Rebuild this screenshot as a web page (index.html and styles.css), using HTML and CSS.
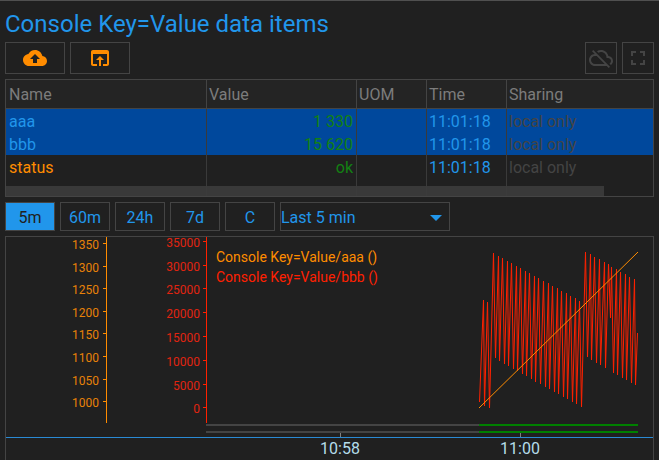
FILE: index.html
```html
<!DOCTYPE html>
<html lang="en">
<head>
<meta charset="utf-8">
<title>Console Key=Value data items</title>
<link rel="stylesheet" href="styles.css">
</head>
<body>
<main class="panel">
  <h1 class="title">Console Key=Value data items</h1>

  <div class="toolbar">
    <button class="btn btn-wide" type="button" aria-label="Upload">
      <svg class="icon" viewBox="0 0 24 24"><path d="M19.35 10.04C18.67 6.59 15.64 4 12 4 9.11 4 6.6 5.64 5.35 8.04 2.34 8.36 0 10.91 0 14c0 3.31 2.69 6 6 6h13c2.76 0 5-2.24 5-5 0-2.64-2.05-4.78-4.65-4.96zM14 13v4h-4v-4H7l5-5 5 5h-3z"/></svg>
    </button>
    <button class="btn btn-wide" type="button" aria-label="Open in window">
      <svg class="icon" viewBox="0 0 24 24"><path d="M19 4H5c-1.11 0-2 .9-2 2v12c0 1.1.89 2 2 2h4v-2H5V8h14v10h-4v2h4c1.1 0 2-.9 2-2V6c0-1.1-.89-2-2-2zm-7 6l-4 4h3v6h2v-6h3l-4-4z"/></svg>
    </button>
    <span class="spacer"></span>
    <button class="btn btn-square" type="button" aria-label="Cloud off">
      <svg class="icon" viewBox="0 0 24 24"><path d="M19.35 10.04C18.67 6.59 15.64 4 12 4c-1.48 0-2.85.43-4.01 1.17l1.46 1.46C10.21 6.23 11.08 6 12 6c3.04 0 5.5 2.46 5.5 5.5v.5H19c1.66 0 3 1.34 3 3 0 1.13-.64 2.11-1.56 2.62l1.45 1.45C23.16 18.16 24 16.68 24 15c0-2.64-2.05-4.78-4.65-4.96zM3 5.27l2.75 2.74C2.56 8.15 0 10.77 0 14c0 3.31 2.69 6 6 6h11.73l2 2L21 20.73 4.27 4 3 5.27zM7.73 10l8 8H6c-2.21 0-4-1.79-4-4s1.79-4 4-4h1.73z"/></svg>
    </button>
    <button class="btn btn-square" type="button" aria-label="Full screen">
      <svg class="icon" viewBox="0 0 24 24"><path d="M7 14H5v5h5v-2H7v-3zm-2-4h2V7h3V5H5v5zm12 7h-3v2h5v-5h-2v3zM14 5v2h3v3h2V5h-5z"/></svg>
    </button>
  </div>

  <div class="table-box">
    <table class="items">
      <colgroup><col class="c-name"><col class="c-value"><col class="c-uom"><col class="c-time"><col></colgroup>
      <thead>
        <tr><th>Name</th><th>Value</th><th>UOM</th><th>Time</th><th>Sharing</th></tr>
      </thead>
      <tbody>
        <tr class="selected"><td>aaa</td><td class="value">1 330</td><td></td><td class="time">11:01:18</td><td class="sharing">local only</td></tr>
        <tr class="selected"><td>bbb</td><td class="value">15 620</td><td></td><td class="time">11:01:18</td><td class="sharing">local only</td></tr>
        <tr><td>status</td><td class="value">ok</td><td></td><td class="time">11:01:18</td><td class="sharing">local only</td></tr>
        <tr class="filler"><td></td><td></td><td></td><td></td><td></td></tr>
      </tbody>
    </table>
    <div class="scroll-thumb"></div>
  </div>

  <div class="ranges">
    <button class="range active" type="button">5m</button>
    <button class="range" type="button">60m</button>
    <button class="range" type="button">24h</button>
    <button class="range" type="button">7d</button>
    <button class="range" type="button">C</button>
    <div class="period">
      <select class="period-select" aria-label="Period"><option>Last 5 min</option></select>
      <svg class="period-arrow" viewBox="0 0 12 6"><path d="M0 0H12L6 6Z"/></svg>
    </div>
  </div>

  <div class="chart">
    <svg class="plot" viewBox="6 237 647 223">
      <g class="axis-a">
        <path class="axis-line" d="M106.5 237V423M103 243.5H106M103 266.5H106M103 288.5H106M103 311.5H106M103 333.5H106M103 356.5H106M103 379.5H106M103 401.5H106"/>
        <g class="axis-text">
          <text x="99" y="249">1350</text>
          <text x="99" y="272">1300</text>
          <text x="99" y="294">1250</text>
          <text x="99" y="317">1200</text>
          <text x="99" y="339">1150</text>
          <text x="99" y="362">1100</text>
          <text x="99" y="385">1050</text>
          <text x="99" y="407">1000</text>
        </g>
      </g>
      <g class="axis-b">
        <path class="axis-line" d="M206.5 237V423M203 241.5H206M203 265.5H206M203 288.5H206M203 312.5H206M203 336.5H206M203 360.5H206M203 384.5H206M203 407.5H206"/>
        <g class="axis-text">
          <text x="200" y="247">35000</text>
          <text x="200" y="271">30000</text>
          <text x="200" y="294">25000</text>
          <text x="200" y="318">20000</text>
          <text x="200" y="342">15000</text>
          <text x="200" y="366">10000</text>
          <text x="200" y="390">5000</text>
          <text x="200" y="413">0</text>
        </g>
      </g>
      <g class="legend">
        <text class="legend-a" x="216" y="262">Console Key=Value/aaa ()</text>
        <text class="legend-b" x="216" y="282">Console Key=Value/bbb ()</text>
      </g>
      <path class="series-b" d="M479.5 402L483.5 300 484.5 406 487.5 302 489.5 408 493.5 253 495.5 358 498.5 256 499.5 361 502.5 258 504.5 364 507.5 261 508.5 366 511.5 263 513.5 369 516.5 266 517.5 371 520.5 268 522.5 374 525.5 271 526.5 376 529.5 273 531.5 379 534.5 276 535.5 382 538.5 278 540.5 384 543.5 281 545.5 387 548.5 283 549.5 389 552.5 286 554.5 392 557.5 288 558.5 394 561.5 291 563.5 397 566.5 293 567.5 399 570.5 296 572.5 402 575.5 298 576.5 404 579.5 301 581.5 407 585.5 252 587.5 357 590.5 254 591.5 360 594.5 257 596.5 363 599.5 259 600.5 365 604.5 262 605.5 368 608.5 264 610.5 318 611.5 267 613.5 373 616.5 269 617.5 375 620.5 272 622.5 378 625.5 274 626.5 380 629.5 277 631.5 383 634.5 279 635.5 385 637.5 333"/>
      <path class="series-a" d="M479 408L638 252"/>
      <path class="state-idle" d="M206 425H479M206 432H479"/>
      <path class="state-ok" d="M479 425H638M479 432H638"/>
      <path class="time-tick" d="M340.5 433V437M520.5 433V437"/>
      <path class="time-line" d="M6 437.5H653"/>
      <g class="time-text">
        <text x="340" y="454">10:58</text>
        <text x="520" y="454">11:00</text>
      </g>
    </svg>
  </div>
</main>
</body>
</html>
```
FILE: styles.css
```css
* {
  box-sizing: border-box;
}

body {
  margin: 0;
  background: #202020;
  color: #2196eb;
  font: 16px/23px Roboto, "Liberation Sans", sans-serif;
  overflow: hidden;
}

.panel {
  display: flex;
  flex-direction: column;
  gap: 5px;
  padding: 0 5px;
  border-top: 1px solid #505050;
}

.title {
  margin: 10px 0 0;
  font-size: 24px;
  font-weight: 400;
  line-height: 26px;
}

.toolbar,
.ranges {
  display: flex;
  gap: 5px;
}

.spacer {
  flex: 1;
}

.btn,
.range {
  display: flex;
  align-items: center;
  justify-content: center;
  padding: 0;
  border: 1px solid #444;
  background: #202020;
  color: inherit;
  font: inherit;
}

.btn {
  height: 32px;
}

.btn-wide {
  width: 60px;
  color: #ff8c00;
}

.btn-square {
  width: 32px;
  color: #444;
}

.icon {
  width: 24px;
  height: 24px;
  fill: currentColor;
}

.table-box {
  position: relative;
  border: 1px solid #444;
}

.items {
  width: 100%;
  table-layout: fixed;
  border-collapse: separate;
  border-spacing: 0;
}

.c-name {
  width: 201px;
}

.c-value {
  width: 150px;
}

.c-uom {
  width: 70px;
}

.c-time {
  width: 80px;
}

.items th,
.items td {
  height: 23px;
  padding: 0 3px;
  border-right: 1px solid #3a3a3a;
  text-align: left;
  font-weight: 400;
}

.items th {
  height: 29px;
  border-bottom: 1px solid #444;
  border-right-color: #444;
  background: #242424;
  color: #7c7c7c;
}

.items th + th,
.items td + td {
  padding-left: 2px;
}

.items th:last-child,
.items td:last-child {
  border-right: 0;
}

.items td {
  padding-top: 2px;
  line-height: 21px;
  color: #ff8c00;
}

.items .selected td {
  background: #00489c;
  color: #2196eb;
}

.items .value,
.items .selected .value {
  color: #138013;
  text-align: right;
}

.items .time {
  color: #2196eb;
}

.items .sharing,
.items .selected .sharing {
  color: #444;
}

.items .filler td {
  height: 18px;
}

.scroll-thumb {
  position: absolute;
  left: 0;
  bottom: 0;
  width: 92.4%;
  height: 10px;
  background: rgba(60, 60, 60, 0.9);
}

.range {
  width: 50px;
  height: 29px;
  padding-top: 2px;
}

.range.active {
  border-color: #444;
  background: #2196eb;
  color: #202020;
}

.period {
  position: relative;
  width: 170px;
}

.period-select {
  width: 100%;
  height: 29px;
  padding: 2px 0 0;
  border: 1px solid #444;
  border-radius: 0;
  appearance: none;
  background: #202020;
  color: inherit;
  font: inherit;
}

.period-arrow {
  position: absolute;
  top: 13px;
  right: 8px;
  width: 12px;
  height: 6px;
  fill: #2196eb;
  pointer-events: none;
}

.chart {
  border: 1px solid #444;
}

.plot {
  display: block;
  width: 100%;
  height: auto;
}

.plot path {
  fill: none;
}

.axis-a {
  fill: #e88208;
  stroke: none;
}

.axis-a .axis-line {
  stroke: #ff8c00;
}

.axis-b {
  fill: #e02410;
}

.axis-b .axis-line {
  stroke: #ff2000;
}

.axis-text {
  font-size: 12px;
  text-anchor: end;
}

.legend {
  font-size: 14px;
}

.legend-a {
  fill: #ff8c00;
}

.legend-b {
  fill: #ff2000;
}

.series-a {
  stroke: #ff8c00;
}

.series-b {
  stroke: #ff2000;
  stroke-linejoin: bevel;
}

.state-idle {
  stroke: #444;
  stroke-width: 2px;
}

.state-ok {
  stroke: #008000;
  stroke-width: 2px;
}

.time-tick {
  stroke: #808080;
}

.time-line {
  stroke: #2a8ad4;
}

.time-text {
  fill: #b4dcea;
  font-size: 16px;
  text-anchor: middle;
}
```
